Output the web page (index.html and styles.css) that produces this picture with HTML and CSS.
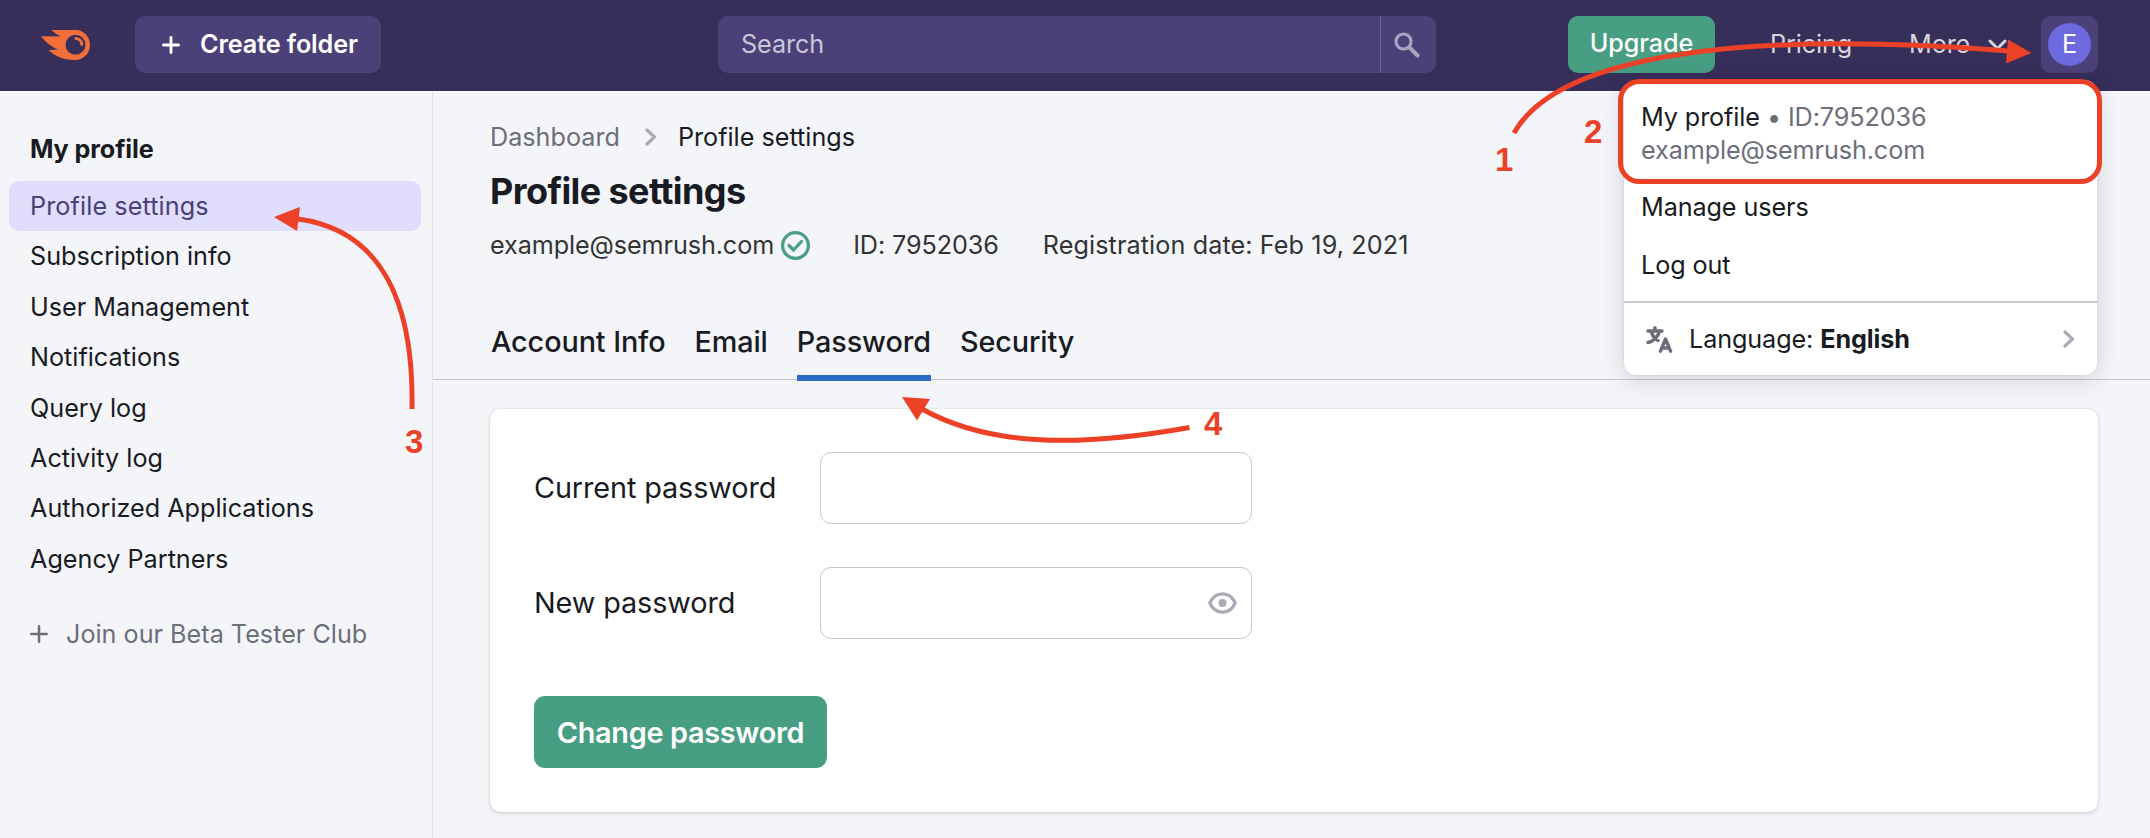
FILE: index.html
```html
<!DOCTYPE html>
<html lang="en">
	<head>
		<meta charset="utf-8" />
		<title>Profile settings</title>
		<link rel="stylesheet" href="styles.css">
	</head>
	<body>
		<header class="header">
			<a class="logo" href="#">
				<svg width="50" height="30" viewBox="0 0 50 30">
					<path fill="#f36f3a" d="M10.5 0H35C43 0 49 7 49 15S43 30 34 30C22 30 14 26 7.500 20.300L17 19.500C11 17 4 12 0 6.300L19.500 6.600C17 4.800 13 2.800 10.500 0Z"/>
					<circle cx="34.500" cy="14.800" r="10" fill="#372e5a"/>
					<path fill="none" stroke="#f36f3a" stroke-width="3" stroke-linecap="round" d="M35 8.500a6.200 6.200 0 0 1 5.800 5.800"/>
				</svg>
			</a>
			<a class="btn-create" href="#">
				<svg width="18" height="18" viewBox="0 0 18 18"><path stroke="#fff" stroke-width="2.800" stroke-linecap="round" d="M9 1.400v15.200M1.400 9h15.200"/></svg>
				<span>Create folder</span>
			</a>
			<div class="search">
				<span class="search-text">Search</span>
				<span class="search-btn">
					<svg width="26" height="26" viewBox="0 0 26 26"><circle cx="9.500" cy="9.500" r="7.500" fill="none" stroke="#a9a3c0" stroke-width="3.200"/><path stroke="#a9a3c0" stroke-width="4" stroke-linecap="round" d="M16 16l7.500 7.500"/></svg>
				</span>
			</div>
			<nav class="top-nav">
				<a class="btn-upgrade" href="#">Upgrade</a>
				<a class="nav-pricing" href="#">Pricing</a>
				<a class="nav-more" href="#"><span>More</span>
					<svg width="19" height="12" viewBox="0 0 19 12"><path fill="none" stroke="#d7d5de" stroke-width="3" stroke-linecap="round" stroke-linejoin="round" d="M2 2l7.500 7.500L17 2"/></svg>
				</a>
				<a class="user" href="#"><span class="avatar">E</span></a>
			</nav>
		</header>

		<div class="page">
			<aside class="sidebar">
				<h2>My profile</h2>
				<ul class="menu">
					<li class="active">Profile settings</li>
					<li>Subscription info</li>
					<li>User Management</li>
					<li>Notifications</li>
					<li>Query log</li>
					<li>Activity log</li>
					<li>Authorized Applications</li>
					<li>Agency Partners</li>
				</ul>
				<a class="beta" href="#">
					<svg width="18" height="18" viewBox="0 0 18 18"><path stroke="#6c6e79" stroke-width="2.500" stroke-linecap="round" d="M9 1.300v15.400M1.300 9h15.400"/></svg>
					Join our Beta Tester Club
				</a>
			</aside>

			<main class="content">
				<div class="crumbs">
					<span class="crumb-link">Dashboard</span>
					<svg width="12" height="18" viewBox="0 0 12 18"><path fill="none" stroke="#a9abb6" stroke-width="3.200" stroke-linecap="round" stroke-linejoin="round" d="M2 2l7.500 7L2 16"/></svg>
					<span>Profile settings</span>
				</div>
				<h1>Profile settings</h1>
				<div class="info">
					<span class="email">example@semrush.com</span>
					<svg width="29" height="29" viewBox="0 0 29 29"><g fill="none" stroke="#479e82" stroke-width="3.200"><circle cx="14.500" cy="14.500" r="12.900"/><path stroke-linecap="round" stroke-linejoin="round" d="M8 14.500l4.500 4.500 8-8.500"/></g></svg>
					<span class="user-id">ID: 7952036</span>
					<span class="reg-date">Registration date: Feb 19, 2021</span>
				</div>
				<div class="tabs">
					<a href="#">Account Info</a>
					<a href="#">Email</a>
					<a class="active" href="#">Password</a>
					<a href="#">Security</a>
				</div>
				<form class="card">
					<div class="row">
						<label>Current password</label>
						<div class="field"></div>
					</div>
					<div class="row">
						<label>New password</label>
						<div class="field">
							<svg width="29" height="22" viewBox="0 0 29 22"><path fill="none" stroke="#a9abb6" stroke-width="3.300" d="M1.800 11C4 6 8.500 1.800 14.500 1.800S25 6 27.200 11C25 16 20.500 20.200 14.500 20.200S4 16 1.800 11Z"/><circle cx="14.500" cy="11" r="4" fill="#a9abb6"/></svg>
						</div>
					</div>
					<button class="btn-submit" type="button">Change password</button>
				</form>
			</main>
		</div>

		<!-- user menu -->
		<div class="dropdown">
			<div class="profile">
				<div>My profile <span class="muted">• ID:7952036</span></div>
				<div class="muted">example@semrush.com</div>
			</div>
			<div class="item">Manage users</div>
			<div class="item">Log out</div>
			<div class="lang">
				<svg class="lang-icon" width="27" height="27" viewBox="0 0 27 27"><g fill="none" stroke="#6c6e79" stroke-width="3.400" stroke-linecap="round" stroke-linejoin="round"><path d="M2 5h14M9 1.700V5M13.500 5.500C12 11 7 15.500 2 16.500M5.500 6c1 4 3.500 7 6.500 8.500"/><path d="M14.500 25.200l5-12.200 5 12.200M16.500 22h6"/></g></svg>
				<span>Language: <b>English</b></span>
				<svg class="lang-arrow" width="12" height="18" viewBox="0 0 12 18"><path fill="none" stroke="#a9abb6" stroke-width="3.200" stroke-linecap="round" stroke-linejoin="round" d="M2 2l7.500 7L2 16"/></svg>
			</div>
		</div>

		<!-- numbered steps over the page -->
		<svg class="steps" width="2150" height="838" viewBox="0 0 2150 838">
			<g fill="none" stroke="#ec4127" stroke-width="5">
				<path d="M1514 133C1562 48 1770 32 2008 51"/>
				<path d="M412 409C414 300 380 230 298 219"/>
				<path d="M1189.500 427.500C1080 447 990 447 922 409"/>
				<rect x="1620.500" y="81.500" width="479" height="100" rx="19"/>
			</g>
			<g fill="#ec4127">
				<path d="M2008 39.500L2031.500 53L2006 63.500Z"/>
				<path d="M274 217L300 207L297 231Z"/>
				<path d="M902 397L930 399L917 420.500Z"/>
				<text x="1495" y="171">1</text>
				<text x="1584" y="143">2</text>
				<text x="405" y="453">3</text>
				<text x="1204" y="435">4</text>
			</g>
		</svg>
	</body>
</html>
```

FILE: styles.css
```css
* {
	box-sizing: border-box;
}
body {
	margin: 0;
	height: 838px;
	overflow: hidden;
	position: relative;
	background-color: #f4f5f9;
	color: #191b23;
	font-family: Inter, "Liberation Sans", sans-serif;
	font-size: 25.2px;
	line-height: 36px;
	letter-spacing: -.1px;
}
a {
	color: inherit;
	text-decoration: none;
}
svg {
	display: block;
	flex-shrink: 0;
}

/** header **/
.header {
	display: flex;
	align-items: center;
	height: 91px;
	padding: 0 52px 2px 41px;
	background-color: #372e5a;
	color: #d7d5de;
}
.logo {
	width: 94px;
}
.btn-create {
	display: flex;
	align-items: center;
	gap: 20px;
	width: 246px;
	height: 57px;
	padding-left: 27px;
	border-radius: 10px;
	background-color: #4c4079;
	color: #fff;
	font-weight: 600;
	white-space: nowrap;
}
.btn-create span,
.nav-more span {
	padding-bottom: 2px;
}
.search {
	display: flex;
	width: 718px;
	height: 57px;
	margin-left: 337px;
	border-radius: 10px;
	background-color: #4c4079;
	color: #c9c6d7;
}
.search-text {
	flex: 1;
	padding: 10px 0 0 23px;
}
.search-btn {
	display: flex;
	align-items: center;
	width: 56px;
	padding-left: 13px;
	border-left: 1px solid #6f6593;
}
.top-nav {
	display: flex;
	align-items: center;
	margin-left: auto;
}
.btn-upgrade {
	width: 147px;
	height: 57px;
	border-radius: 10px;
	background-color: #479e82;
	color: #fff;
	font-weight: 500;
	line-height: 55px;
	text-align: center;
}
.nav-pricing {
	width: 139px;
	margin-left: 55px;
	padding-bottom: 2px;
}
.nav-more {
	display: flex;
	align-items: center;
	justify-content: space-between;
	width: 98px;
	margin-right: 34px;
}
.user {
	display: flex;
	align-items: center;
	justify-content: center;
	width: 57px;
	height: 57px;
	border-radius: 10px;
	background-color: #4c4079;
}
.avatar {
	width: 43px;
	height: 43px;
	border-radius: 50%;
	background-color: #6d69de;
	color: #fff;
	line-height: 43px;
	text-align: center;
}

/** sidebar **/
.page {
	display: flex;
	height: 747px;
}
.sidebar {
	width: 433px;
	padding: 40px 11px 0 9px;
	border-right: 1px solid #e0e1e9;
	letter-spacing: 0;
}
.sidebar h2 {
	margin: 0 0 14px 21px;
	font-size: 25.2px;
	font-weight: 700;
	line-height: 36px;
	letter-spacing: -.1px;
}
.menu {
	margin: 0;
	padding: 0;
	list-style: none;
}
.menu li {
	height: 50.4px;
	padding-left: 21px;
	border-radius: 10px;
	line-height: 50px;
}
.menu li.active {
	background-color: #e0ddfd;
	color: #4c4079;
	letter-spacing: .1px;
}
.beta {
	display: flex;
	align-items: center;
	gap: 18px;
	margin: 32px 0 0 21px;
	color: #6c6e79;
}

/** content **/
.content {
	flex: 1;
	padding-top: 28px;
}
.crumbs {
	display: flex;
	align-items: center;
	padding-left: 57px;
	letter-spacing: 0;
}
.crumbs svg {
	margin: 0 21px 0 25px;
}
.crumb-link {
	color: #6c6e79;
}
h1 {
	margin: 14px 0 0 57px;
	font-size: 36px;
	font-weight: 700;
	line-height: 44px;
	letter-spacing: -.6px;
}
.info {
	display: flex;
	align-items: center;
	margin-top: 14px;
	padding-left: 57px;
	color: #333;
}
.info svg {
	margin-left: 7px;
}
.user-id {
	margin-left: 43px;
}
.reg-date {
	margin-left: 44px;
	letter-spacing: .1px;
}
.tabs {
	display: flex;
	gap: 29px;
	height: 62px;
	margin-top: 55px;
	margin-bottom: 29px;
	padding-left: 58px;
	border-bottom: 1px solid #c4c7cf;
	font-size: 28.8px;
	font-weight: 500;
	line-height: 48px;
}
.tabs a {
	height: 63px;
}
.tabs a.active {
	border-bottom: 6px solid #2b6cc8;
}
.card {
	width: 1608px;
	height: 403px;
	margin-left: 57px;
	padding: 43px 44px;
	border-radius: 11px;
	background-color: #fff;
	box-shadow: 0 0 2px rgba(25, 27, 35, .16), 0 2px 4px rgba(25, 27, 35, .12);
}
.row {
	display: flex;
	align-items: center;
	margin-bottom: 43px;
	font-size: 28.8px;
}
.row label {
	width: 286px;
}
.field {
	display: flex;
	align-items: center;
	justify-content: flex-end;
	width: 432px;
	height: 72px;
	padding-right: 14px;
	border: 1px solid #c4c7cf;
	border-radius: 11px;
}
.btn-submit {
	width: 293px;
	height: 72px;
	margin-top: 14px;
	border: 0;
	border-radius: 11px;
	background-color: #479e82;
	color: #fff;
	font: 600 28.8px Inter, "Liberation Sans", sans-serif;
	letter-spacing: -.3px;
}

/** dropdown under the avatar **/
.dropdown {
	position: absolute;
	top: 80px;
	right: 53px;
	width: 473px;
	height: 295px;
	padding-top: 21px;
	border-radius: 12px;
	background-color: #fff;
	box-shadow: 0 4px 24px rgba(25, 27, 35, .16), 0 0 2px rgba(25, 27, 35, .12);
}
.profile {
	height: 77px;
	padding-left: 17px;
	line-height: 33px;
}
.muted {
	color: #6c6e79;
}
.item {
	height: 58px;
	padding-left: 17px;
	line-height: 58px;
}
.lang {
	display: flex;
	align-items: center;
	height: 74px;
	margin-top: 7px;
	padding: 0 22px;
	border-top: 2px solid #c4c7cf;
}
.lang-icon {
	margin-right: 16px;
}
.lang-arrow {
	margin-left: auto;
}

.steps {
	position: absolute;
	top: 0;
	left: 0;
	font-family: "Liberation Sans", Arial, sans-serif;
	font-size: 33px;
	font-weight: 700;
}
```
